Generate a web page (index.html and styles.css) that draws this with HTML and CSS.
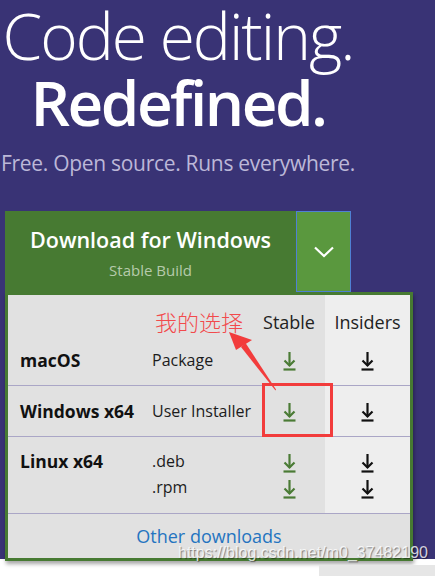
FILE: index.html
```html
<!DOCTYPE html>
<html lang="en">
<head>
<meta charset="utf-8">
<title>Visual Studio Code</title>
<link rel="stylesheet" href="styles.css">
</head>
<body>
<div class="page">
  <section class="hero">
    <div class="intro">
      <h1 class="title"><span class="light">Code editing.</span><span class="strong">Redefined.</span></h1>
      <p class="tagline">Free. Open source. Runs everywhere.</p>
    </div>
    <div class="download">
      <div class="btn-row">
        <a class="btn-main" href="#">
          <span class="btn-title">Download for Windows</span>
          <span class="btn-sub">Stable Build</span>
        </a>
        <span class="btn-drop">
          <svg class="chev" width="22" height="12" viewBox="0 0 22 12"><polyline points="2,1.5 11,10 20,1.5" fill="none" stroke="#fff" stroke-width="2.2"/></svg>
        </span>
      </div>
      <div class="panel">
        <div class="row head">
          <div class="cell c1"></div>
          <div class="cell c2"></div>
          <div class="cell c3">Stable</div>
          <div class="cell c4">Insiders</div>
        </div>
        <div class="row mac">
          <div class="cell c1">macOS</div>
          <div class="cell c2">Package</div>
          <div class="cell c3"><svg class="dl green" width="13" height="19" viewBox="0 0 13 19"><line x1="6.5" y1="0" x2="6.5" y2="13.5"/><polyline points="1.5,8.5 6.5,13.5 11.5,8.5"/><line x1="0.5" y1="17.5" x2="12.5" y2="17.5"/></svg></div>
          <div class="cell c4"><svg class="dl black" width="13" height="19" viewBox="0 0 13 19"><line x1="6.5" y1="0" x2="6.5" y2="13.5"/><polyline points="1.5,8.5 6.5,13.5 11.5,8.5"/><line x1="0.5" y1="17.5" x2="12.5" y2="17.5"/></svg></div>
        </div>
        <div class="row win">
          <div class="cell c1">Windows x64</div>
          <div class="cell c2">User Installer</div>
          <div class="cell c3"><svg class="dl green" width="13" height="19" viewBox="0 0 13 19"><line x1="6.5" y1="0" x2="6.5" y2="13.5"/><polyline points="1.5,8.5 6.5,13.5 11.5,8.5"/><line x1="0.5" y1="17.5" x2="12.5" y2="17.5"/></svg></div>
          <div class="cell c4"><svg class="dl black" width="13" height="19" viewBox="0 0 13 19"><line x1="6.5" y1="0" x2="6.5" y2="13.5"/><polyline points="1.5,8.5 6.5,13.5 11.5,8.5"/><line x1="0.5" y1="17.5" x2="12.5" y2="17.5"/></svg></div>
        </div>
        <div class="row linux">
          <div class="cell c1">Linux x64</div>
          <div class="cell c2"><span class="line">.deb</span><span class="line">.rpm</span></div>
          <div class="cell c3">
            <span class="line"><svg class="dl green" width="13" height="19" viewBox="0 0 13 19"><line x1="6.5" y1="0" x2="6.5" y2="13.5"/><polyline points="1.5,8.5 6.5,13.5 11.5,8.5"/><line x1="0.5" y1="17.5" x2="12.5" y2="17.5"/></svg></span>
            <span class="line"><svg class="dl green" width="13" height="19" viewBox="0 0 13 19"><line x1="6.5" y1="0" x2="6.5" y2="13.5"/><polyline points="1.5,8.5 6.5,13.5 11.5,8.5"/><line x1="0.5" y1="17.5" x2="12.5" y2="17.5"/></svg></span>
          </div>
          <div class="cell c4">
            <span class="line"><svg class="dl black" width="13" height="19" viewBox="0 0 13 19"><line x1="6.5" y1="0" x2="6.5" y2="13.5"/><polyline points="1.5,8.5 6.5,13.5 11.5,8.5"/><line x1="0.5" y1="17.5" x2="12.5" y2="17.5"/></svg></span>
            <span class="line"><svg class="dl black" width="13" height="19" viewBox="0 0 13 19"><line x1="6.5" y1="0" x2="6.5" y2="13.5"/><polyline points="1.5,8.5 6.5,13.5 11.5,8.5"/><line x1="0.5" y1="17.5" x2="12.5" y2="17.5"/></svg></span>
          </div>
        </div>
        <div class="other"><a href="#">Other downloads</a></div>
      </div>
    </div>
  </section>
  <div class="bottom"><div class="grey"></div></div>

  <div class="annot">
    <span class="note">我的选择</span>
    <span class="mark"></span>
    <svg class="arrow" width="435" height="576" viewBox="0 0 435 576">
      <polygon points="229,332 252,340 236,350" fill="#f23c3c"/>
      <polygon points="245.5,343 241,347 275.5,390.5 276,389.5" fill="#f23c3c"/>
    </svg>
    <span class="wm">https://blog.csdn.net/m0_37482190</span>
  </div>
</div>
</body>
</html>
```

FILE: styles.css
```css
* { box-sizing: border-box; }

html, body {
  margin: 0;
  padding: 0;
  background: #ffffff;
}

body {
  font-family: "Open Sans", "Noto Sans", sans-serif;
}

.page {
  position: relative;
  width: 435px;
  height: 576px;
  overflow: hidden;
}

.hero {
  background: #393375;
  height: 559px;
}

.intro {
  width: 356px;
  text-align: center;
  color: #ffffff;
}

.title {
  margin: 0;
  padding-top: 2px;
  font-size: 64px;
  line-height: 67px;
  font-weight: 400;
  white-space: nowrap;
}

.title .light {
  display: block;
  font-weight: 300;
  letter-spacing: -2px;
}

.title .strong {
  display: block;
  font-weight: 600;
  font-size: 62px;
  letter-spacing: -2.5px;
}

.tagline {
  margin: 12px 0 0;
  font-size: 21px;
  line-height: 30px;
  letter-spacing: -0.3px;
  color: #bcb8d8;
  white-space: nowrap;
}

.download {
  margin: 33px 0 0 5px;
  width: 408px;
}

.btn-row {
  display: flex;
  height: 81px;
}

.btn-main {
  width: 291px;
  background: #477a32;
  display: flex;
  flex-direction: column;
  align-items: center;
  padding-top: 17px;
  color: #ffffff;
  text-decoration: none;
}

.btn-title {
  font-size: 21.5px;
  line-height: 24px;
  font-weight: 600;
  white-space: nowrap;
}

.btn-sub {
  margin-top: 8px;
  font-size: 15px;
  line-height: 20px;
  color: #b6caab;
}

.btn-drop {
  width: 55px;
  background: #5a983e;
  border: 1px solid #4f80d4;
  display: flex;
  align-items: center;
  justify-content: center;
}

.panel {
  border: 3px solid #477a32;
  background: #e1e1e1;
  box-shadow: 1px 3px 4px rgba(0, 0, 0, 0.35);
}

.row {
  display: grid;
  grid-template-columns: 144px 101px 72px 85px;
  font-size: 16px;
  line-height: 22px;
  color: #111111;
}

.row.mac, .row.win, .row.linux {
  border-bottom: 1px solid #aaa6c6;
}

.cell.c1 {
  padding-left: 12px;
  font-weight: 700;
  font-size: 17.5px;
  white-space: nowrap;
}

.cell.c2 {
  color: #1c1c1c;
  white-space: nowrap;
}

.cell.c3, .cell.c4 {
  text-align: center;
}

.cell.c4 {
  background: #eeeeee;
}

.row.head .cell {
  padding-top: 16px;
  padding-bottom: 10px;
  font-size: 18px;
  color: #222222;
}

.row.mac .cell {
  padding-top: 6px;
  padding-bottom: 14px;
}

.row.win .cell {
  padding-top: 14px;
  padding-bottom: 14px;
}

.row.linux {
  line-height: 26px;
}

.row.linux .cell {
  padding-top: 11px;
  padding-bottom: 13px;
}

.line {
  display: block;
}

.dl {
  vertical-align: -5px;
  fill: none;
  stroke-width: 2.2;
}

.row.linux .dl {
  vertical-align: -6px;
}

.dl.green { stroke: #4a7b35; }
.dl.black { stroke: #111111; }

.other {
  padding: 11px 0;
  text-align: center;
  font-size: 18px;
  line-height: 22px;
}

.other a {
  color: #2474c0;
  text-decoration: none;
}

.bottom {
  height: 17px;
  display: flex;
  justify-content: flex-end;
}

.grey {
  margin-top: 6px;
  width: 116px;
  background: #e6e6e6;
}

.annot {
  position: absolute;
  left: 0;
  top: 0;
  width: 435px;
  height: 576px;
  pointer-events: none;
}

.note {
  position: absolute;
  left: 155px;
  top: 309px;
  font-family: "Noto Sans CJK SC", sans-serif;
  font-weight: 300;
  font-size: 22px;
  line-height: 24px;
  color: #f24a4c;
  white-space: nowrap;
}

.mark {
  position: absolute;
  left: 262px;
  top: 383px;
  width: 71px;
  height: 54px;
  border: 3px solid #f23c3c;
}

.arrow {
  position: absolute;
  left: 0;
  top: 0;
}

.wm {
  position: absolute;
  left: 178px;
  top: 545px;
  font-family: "Liberation Sans", Arial, sans-serif;
  font-size: 16px;
  line-height: 16px;
  color: rgba(255, 255, 255, 0.8);
  text-shadow: 1px 1px 1px rgba(0, 0, 0, 0.45);
  white-space: nowrap;
}
```
